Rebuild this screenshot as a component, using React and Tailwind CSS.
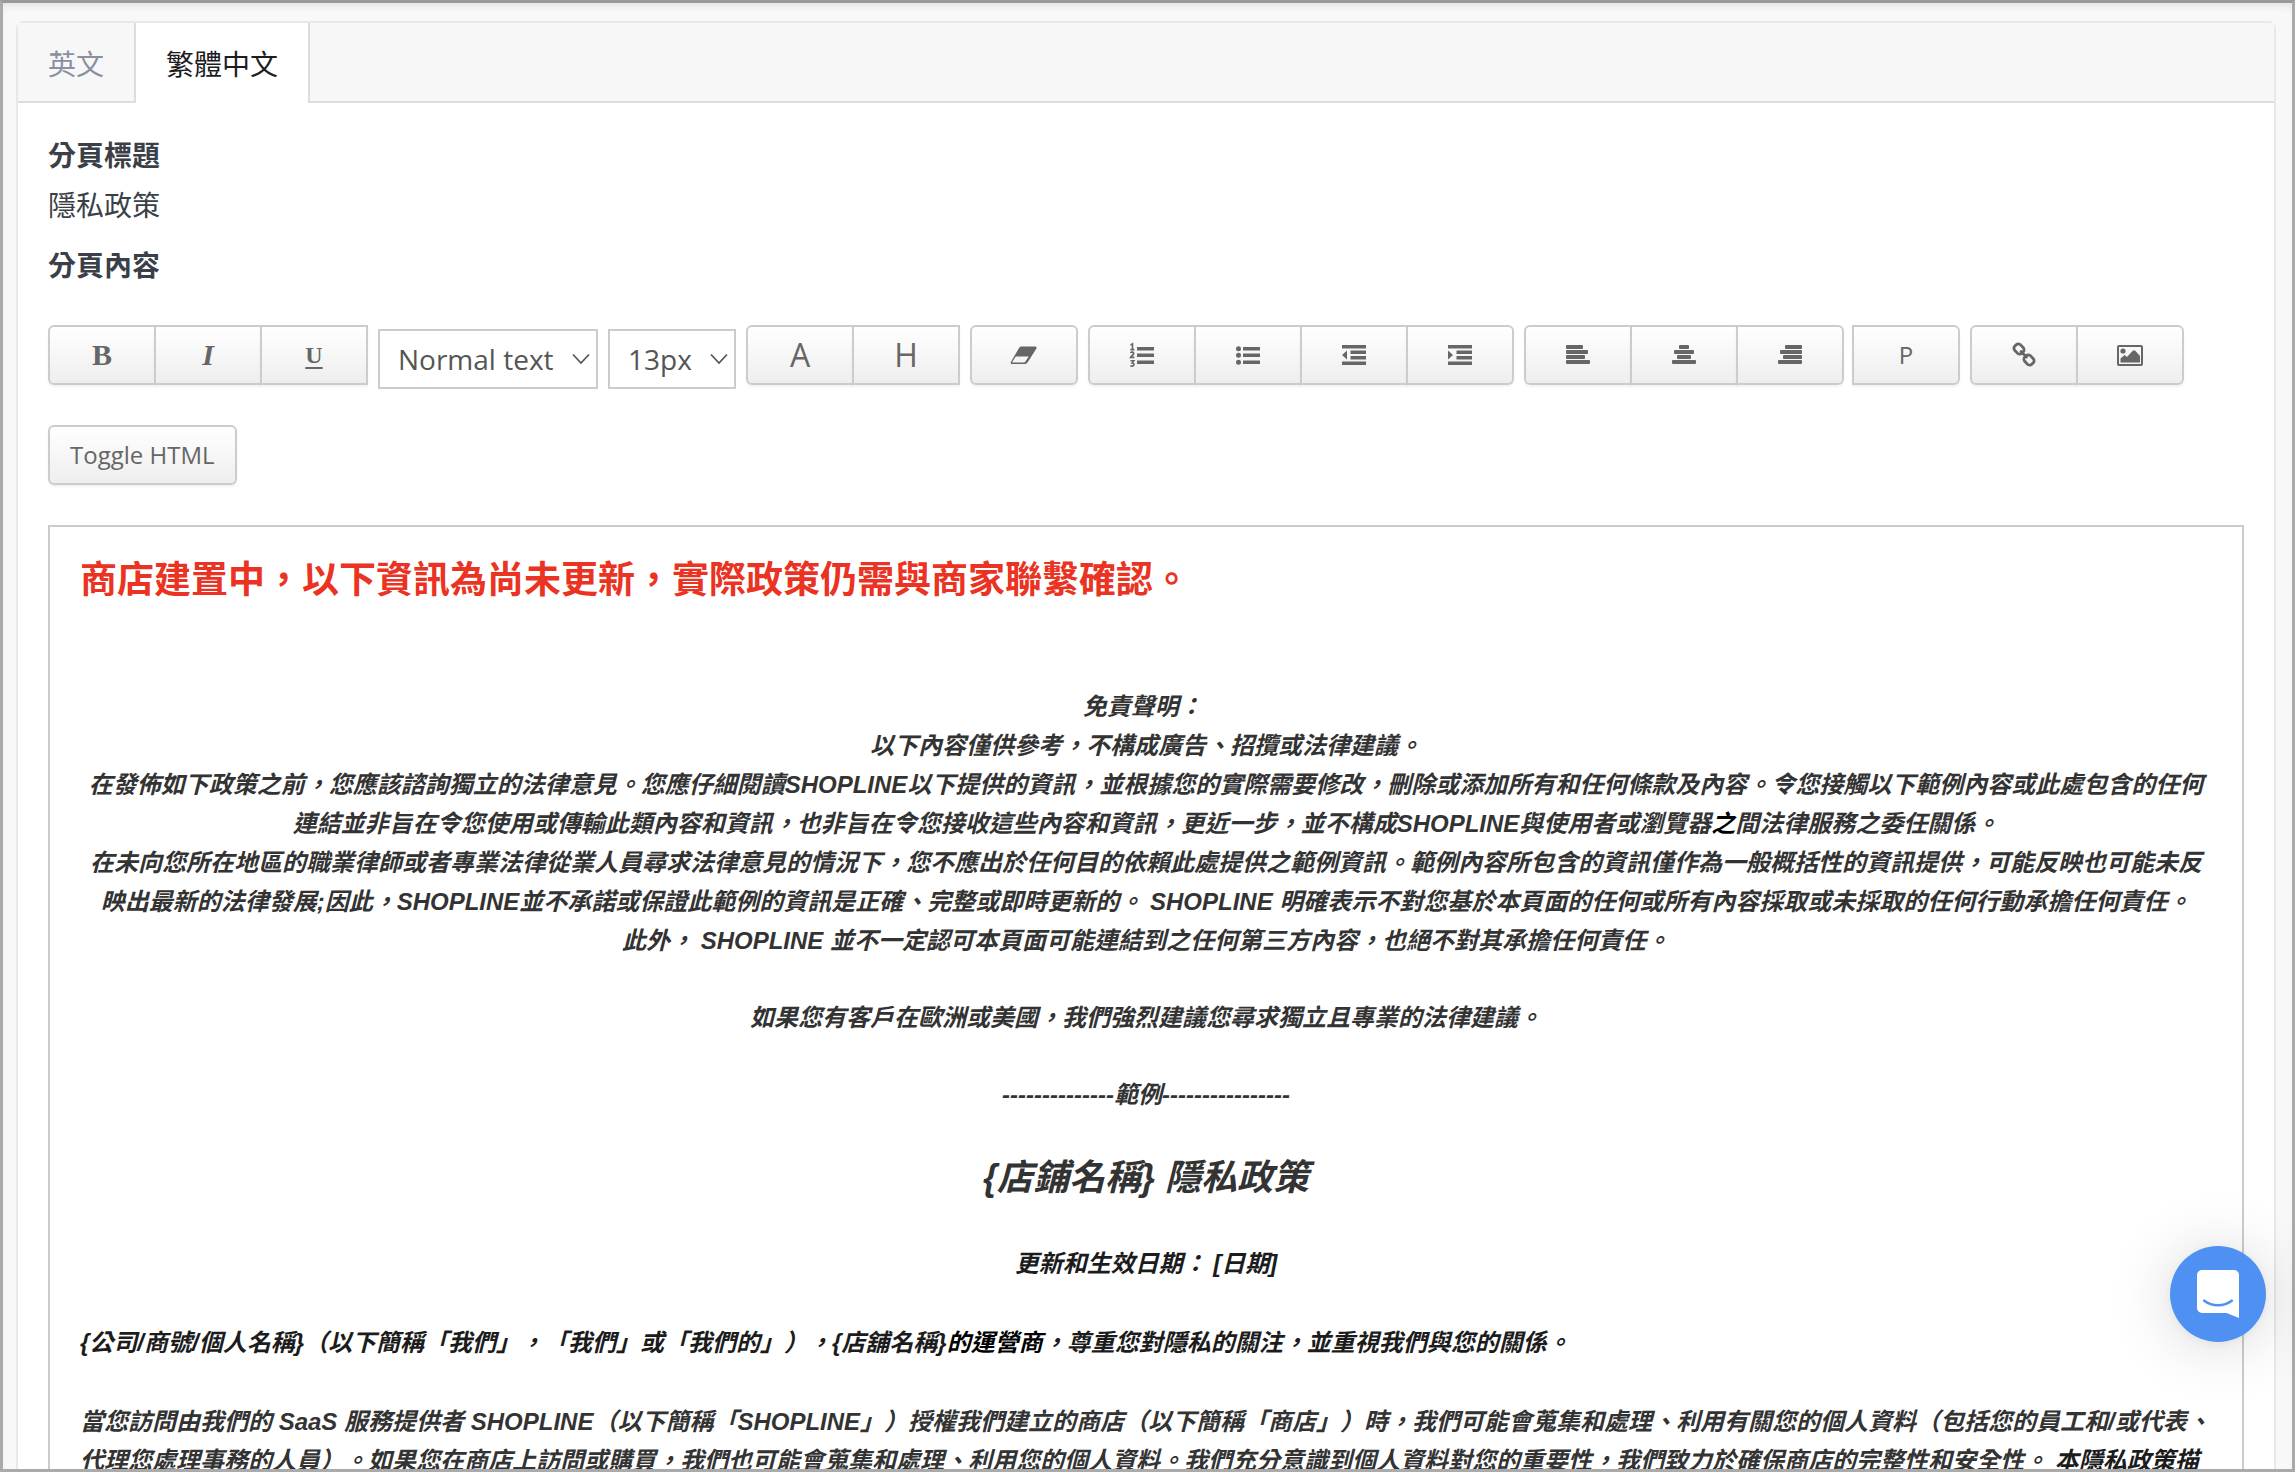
import React, { useState } from "react";

const ICONS = {
    eraser: (
        <>
            <path fillRule="evenodd" d="M9.600 3.500h13.300c1.500 0 2.100 1 1.400 2.200L15.500 19.600c-.6.900-1.300 1.400-2.300 1.400H.2c-1.300 0-1.900-1-1.300-2.100L7 5c.6-1 1.400-1.500 2.600-1.500ZM3.800 13.500.4 18.700c-.3.500 0 .8.400.8h11.200c.6 0 1-.2 1.300-.7l3.400-5.300Z" />
        </>
    ),
    ordered: (
        <>
            <path d="M7 4h17v3.500H7zM7 10.500h17V14H7zM7 17.500h17V21H7z" />
            <path
                fill="none"
                stroke="currentColor"
                strokeWidth="1.600"
                d="M.5 2 2.500 .9V6.500M.4 6.600h4M.5 10c.6-1.200 3.200-1.200 3.200.4 0 1.300-1.700 2-3.100 4h3.800M.5 17.700h3.300l-1.600 2.200c2.400 0 2.200 3.200 0 3.200-.8 0-1.400-.2-1.900-.5"
            />
        </>
    ),
    bullets: (
        <>
            <circle cx="2.500" cy="5.700" r="2.500" />
            <circle cx="2.500" cy="12.300" r="2.500" />
            <circle cx="2.500" cy="19.200" r="2.500" />
            <path d="M7 4h17v3.500H7zM7 10.500h17V14H7zM7 17.500h17V21H7z" />
        </>
    ),
    outdent: <path d="M0 2h24v3.500H0zM8.500 7.500H24V11H8.500zM8.500 13H24v3.500H8.500zM0 18.500h24V22H0zM5 7.500v9L0 12z" />,
    indent: <path d="M0 2h24v3.500H0zM8.500 7.500H24V11H8.500zM8.500 13H24v3.500H8.500zM0 18.500h24V22H0zM0 7.500v9L5 12z" />,
    left: (
        <>
            <rect x="0" y="2" width="17" height="4" rx="1" />
            <rect x="0" y="7" width="22" height="4" rx="1" />
            <rect x="0" y="12" width="19" height="4" rx="1" />
            <rect x="0" y="17" width="24" height="4" rx="1" />
        </>
    ),
    center: (
        <>
            <rect x="7" y="2" width="10" height="4" rx="1" />
            <rect x="2" y="7" width="20" height="4" rx="1" />
            <rect x="5" y="12" width="14" height="4" rx="1" />
            <rect x="0" y="17" width="24" height="4" rx="1" />
        </>
    ),
    right: (
        <>
            <rect x="7" y="2" width="17" height="4" rx="1" />
            <rect x="2" y="7" width="22" height="4" rx="1" />
            <rect x="5" y="12" width="19" height="4" rx="1" />
            <rect x="0" y="17" width="24" height="4" rx="1" />
        </>
    ),
    link: (
        <g fill="none" stroke="currentColor" strokeWidth="2.800">
            <rect x="-5" y="-4" width="10" height="8" rx="3" transform="translate(7 6) rotate(48)" />
            <rect x="-5" y="-4" width="10" height="8" rx="3" transform="translate(17 17) rotate(48)" />
            <path strokeLinecap="round" d="m9 8.500 5.500 5.500" />
        </g>
    ),
    image: (
        <>
            <rect x="0" y="3" width="24" height="19" rx="1" fill="none" stroke="currentColor" strokeWidth="2" />
            <circle cx="5" cy="8" r="2.600" />
            <path d="M2.500 19.500v-4l4-3.500 2.500 2 6-6.500h2l5 5.500v6.500z" />
        </>
    ),
};

// flat: the side of the group that keeps square corners
const GROUPS = {
    font: {
        flat: "right",
        items: [
            { label: "Bold", text: "B", style: "font-[Liberation_Serif,serif] font-bold text-[30px]" },
            { label: "Italic", text: "I", style: "font-[Liberation_Serif,serif] font-bold italic text-[30px]" },
            { label: "Underline", text: "U", style: "font-[Liberation_Serif,serif] font-bold text-2xl underline underline-offset-4 decoration-2" },
        ],
    },
    color: {
        flat: "right",
        items: [
            { label: "Text color", text: "A", style: "font-medium text-[32px]" },
            { label: "Highlight", text: "H", style: "font-medium text-[32px]" },
        ],
    },
    clear: { items: [{ label: "Clear formatting", icon: "eraser" }] },
    lists: {
        items: [
            { label: "Ordered list", icon: "ordered" },
            { label: "Bullet list", icon: "bullets" },
            { label: "Outdent", icon: "outdent" },
            { label: "Indent", icon: "indent" },
        ],
    },
    align: {
        items: [
            { label: "Align left", icon: "left" },
            { label: "Align center", icon: "center" },
            { label: "Align right", icon: "right" },
        ],
    },
    paragraph: { flat: "left", items: [{ label: "Paragraph", text: "P", style: "text-2xl" }] },
    insert: {
        items: [
            { label: "Insert link", icon: "link" },
            { label: "Insert image", icon: "image" },
        ],
    },
};

const BUTTON =
    "flex items-center justify-center h-[60px] border-2 border-[#ccc] bg-gradient-to-b from-white to-[#eee] text-[#666] shadow-[0_2px_2px_rgba(0,0,0,0.05)]";

function ButtonGroup({ group }) {
    const left = group.flat === "left" ? "" : "first:rounded-l-md";
    const right = group.flat === "right" ? "" : "last:rounded-r-md";

    return (
        <div className="flex">
            {group.items.map((item) => (
                <button
                    key={item.label}
                    type="button"
                    aria-label={item.label}
                    className={`${BUTTON} w-[108px] -ml-0.5 first:ml-0 ${left} ${right}`}
                >
                    {item.icon ? (
                        <svg viewBox="0 0 24 24" className="w-6 h-6 overflow-visible" fill="currentColor">
                            {ICONS[item.icon]}
                        </svg>
                    ) : (
                        <span className={`leading-none ${item.style}`}>{item.text}</span>
                    )}
                </button>
            ))}
        </div>
    );
}

function Picker({ label, options, width }) {
    return (
        <div className={`relative mt-1 h-[60px] ${width}`}>
            <select
                aria-label={label}
                className="w-full h-full appearance-none border-2 border-[#ccc] bg-white pl-[18px] pr-8 text-[28px] text-[#555]"
            >
                {options.map((option) => (
                    <option key={option}>{option}</option>
                ))}
            </select>
            <svg
                viewBox="0 0 18 12"
                className="absolute right-2 top-6 w-[18px] h-3 pointer-events-none text-[#555]"
                fill="none"
                stroke="currentColor"
                strokeWidth="1.700"
            >
                <path d="m1 1.500 8 8.500 8-8.500" />
            </svg>
        </div>
    );
}

function Toolbar() {
    return (
        <div className="flex flex-wrap items-start gap-x-2.5 gap-y-9 mt-10">
            <ButtonGroup group={GROUPS.font} />
            <Picker label="Text style" options={["Normal text", "Heading"]} width="w-[220px]" />
            <Picker label="Font size" options={["13px", "14px", "16px"]} width="w-32" />
            <ButtonGroup group={GROUPS.color} />
            <ButtonGroup group={GROUPS.clear} />
            <ButtonGroup group={GROUPS.lists} />
            <div className="flex gap-2">
                <ButtonGroup group={GROUPS.align} />
                <ButtonGroup group={GROUPS.paragraph} />
            </div>
            <ButtonGroup group={GROUPS.insert} />
            <button type="button" className={`${BUTTON} rounded-md px-5 text-2xl`}>
                Toggle HTML
            </button>
        </div>
    );
}

function Policy() {
    return (
        <div className="mt-10 border-2 border-[#ccc] px-[30px] pt-7 font-[Liberation_Sans,Noto_Sans_CJK_TC,sans-serif] font-bold text-2xl leading-[39px] text-[#333] [text-spacing-trim:space-all]">
            <h1 className="text-[37px] leading-[52px] text-[#ea3323]">
                商店建置中，以下資訊為尚未更新，實際政策仍需與商家聯繫確認。
            </h1>
            <div className="mt-20 italic text-center">
                <p>免責聲明：&nbsp;</p>
                <p>以下內容僅供參考，不構成廣告、招攬或法律建議。</p>
                <p>
                    在發佈如下政策之前，您應該諮詢獨立的法律意見。您應仔細閱讀SHOPLINE以下提供的資訊，並根據您的實際需要修改，刪除或添加所有和任何條款及內容。令您接觸以下範例內容或此處包含的任何連結並非旨在令您使用或傳輸此類內容和資訊，也非旨在令您接收這些內容和資訊，更近一步，並不構成SHOPLINE與使用者或瀏覽器<span className="text-black">之</span>間法律服務之委任關係。
                </p>
                <p>
                    在未向您所在地區的職業律師或者專業法律從業人員尋求法律意見的情況下，您不應出於任何目的依賴此處提供之範例資訊。範例內容所包含的資訊僅作為一般概括性的資訊提供，可能反映也可能未反映出最新的法律發展;因此，SHOPLINE並不承諾或保證此範例的資訊是正確、完整或即時更新的。 SHOPLINE 明確表示不對您基於本頁面的任何或所有內容採取或未採取的任何行動承擔任何責任。
                </p>
                <p>此外， SHOPLINE 並不一定認可本頁面可能連結到之任何第三方內容，也絕不對其承擔任何責任。</p>
                <p className="mt-[38px]">如果您有客戶在歐洲或美國，我們強烈建議您尋求獨立且專業的法律建議。</p>
                <p className="mt-[38px]">--------------範例----------------</p>
                <h2 className="mt-[38px] text-4xl leading-[52px]">{"{店鋪名稱} 隱私政策"}</h2>
                <p className="mt-10 text-[#1c1c1c]">更新和生效日期： [日期]</p>
            </div>
            <div className="italic">
                <p className="mt-10 text-[#1c1c1c]">
                    {"{公司/商號/個人名稱}（以下簡稱「我們」，「我們」或「我們的」），{店舖名稱}"}
                    <span className="text-black">的運營商</span>，尊重您對隱私的關注，並重視我們與您的關係。
                </p>
                <p className="mt-10">
                    當您訪問由我們的 SaaS 服務提供者 SHOPLINE（以下簡稱「SHOPLINE」）授權我們建立的商店（以下簡稱「商店」）時，我們可能會蒐集和處理、利用有關您的個人資料（包括您的員工和/或代表、代理您處理事務的人員）。如果您在商店上訪問或購買，我們也可能會蒐集和處理、利用您的個人資料。我們充分意識到個人資料對您的重要性，我們致力於確保商店的完整性和安全性。
                    <span className="text-[#1c1c1c]"> 本隱私政策描</span>
                </p>
            </div>
        </div>
    );
}

function ChatLauncher() {
    return (
        <button
            type="button"
            aria-label="Open chat"
            className="fixed right-[29px] bottom-[130px] flex items-center justify-center w-24 h-24 rounded-full bg-[#4f90f3] shadow-[0_2px_12px_rgba(0,0,0,0.06),0_4px_64px_rgba(0,0,0,0.16)]"
        >
            <svg viewBox="0 0 42 48" className="w-[42px] h-12">
                <path fill="#fff" d="M5 0h32a5 5 0 0 1 5 5v43c-4-1.600-8.500-3.500-12.500-5H5a5 5 0 0 1-5-5V5a5 5 0 0 1 5-5Z" />
                <path d="M7.200 30.700c8 6 19.600 6 27.600 0" fill="none" stroke="#4f90f3" strokeWidth="2.600" strokeLinecap="round" />
            </svg>
        </button>
    );
}

const TABS = ["英文", "繁體中文"];

export default function App() {
    const [active, setActive] = useState("繁體中文");

    return (
        <div className="h-screen overflow-hidden border-[3px] border-[#aaa] border-t-[#999] bg-[#f8f8f8] pt-[18px] pl-[13px] pr-4 font-[Open_Sans,Noto_Sans_CJK_TC,sans-serif] text-[28px] leading-10 text-[#3a3f48] shadow-[inset_0_6px_8px_-4px_rgba(0,0,0,0.1)]">
            <main className="min-h-full rounded-t-lg border-2 border-[#e8e8e8] bg-white">
                <nav className="flex h-20">
                    {TABS.map((tab) => (
                        <button
                            key={tab}
                            type="button"
                            onClick={() => setActive(tab)}
                            className={
                                tab === active
                                    ? "px-[30px] pt-0.5 border-r-2 border-[#ddd] bg-white text-[#1c1c22]"
                                    : "px-[30px] pt-1 border-r-2 border-b-2 border-[#ddd] bg-[#f7f7f7] text-[#8a90a0]"
                            }
                        >
                            {tab}
                        </button>
                    ))}
                    <div className="flex-1 border-b-2 border-[#ddd] bg-[#f7f7f7]" />
                </nav>
                <section className="px-[30px] pt-8">
                    <h3 className="font-bold">分頁標題</h3>
                    <p className="mt-2.5">隱私政策</p>
                    <h3 className="mt-5 font-bold">分頁內容</h3>
                    <Toolbar />
                    <Policy />
                </section>
            </main>
            <ChatLauncher />
        </div>
    );
}
